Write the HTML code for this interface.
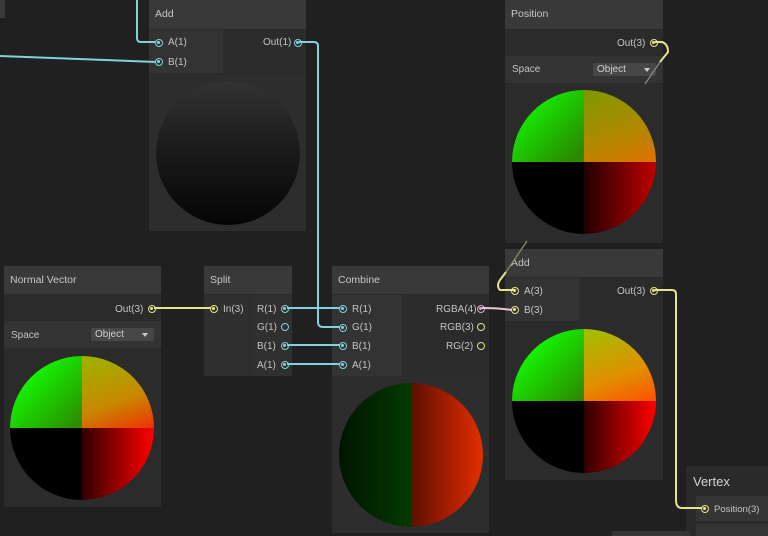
<!DOCTYPE html>
<html><head><meta charset="utf-8"><style>
*{margin:0;padding:0;box-sizing:border-box}
body{width:768px;height:536px;background:#202020;overflow:hidden;position:relative;font-family:"Liberation Sans",sans-serif;font-size:10px;color:#c4c4c4}
.n{position:absolute;background:#2b2b2b}
.h{position:absolute;left:0;right:0;top:0;background:#393939;font-size:10.5px;color:#c8c8c8;padding-left:6px}
.a{position:absolute;background:#333}
.t{position:absolute;white-space:nowrap}
.p{position:absolute;width:8px;height:8px;border-radius:50%;border:1.4px solid #7fd3dc;}
.p::after{content:"";position:absolute;left:1.4px;top:1.4px;width:2.4px;height:2.4px;border-radius:50%;background:#7fd3dc}
.y{border-color:#e4e48a}.y::after{background:#e4e48a}
.pk{border-color:#d9a9d0}.pk::after{background:#d9a9d0}
.e::after{display:none}
.sph{position:absolute;border-radius:50%;overflow:hidden}
.sph div{position:absolute;width:50%;height:50%}
.dd{position:absolute;background:#474747;border-radius:2px;color:#d0d0d0;padding-left:4px;font-size:10px}
.dd::after{content:"";position:absolute;right:6px;top:5px;border-left:3px solid transparent;border-right:3px solid transparent;border-top:4px solid #ccc}
</style></head><body>
<div style="position:absolute;left:0;top:0;width:5px;height:18px;background:#3a3a3a"></div>

<!-- Add top -->
<div class="n" style="left:149px;top:0;width:157px;height:231px">
<div class="h" style="height:29px;line-height:29px">Add</div>
<div class="a" style="left:0;top:30px;width:74px;height:43px"></div>
<div style="position:absolute;left:0;right:0;top:74px;height:157px;background:#2d2d2d"></div>
<div class="sph" style="left:7px;top:81px;width:144px;height:144px;background:linear-gradient(180deg,#333 0%,#1c1c1c 45%,#050505 100%)"></div>
</div>
<div class="p" style="left:155px;top:39px"></div><div class="t" style="left:168px;top:37px">A(1)</div>
<div class="p" style="left:155px;top:58px"></div><div class="t" style="left:168px;top:57px">B(1)</div>
<div class="t" style="left:263px;top:37px">Out(1)</div><div class="p" style="left:294px;top:39px"></div>

<!-- Position -->
<div class="n" style="left:505px;top:0;width:158px;height:243px">
<div class="h" style="height:29px;line-height:29px">Position</div>
<div style="position:absolute;left:0;right:0;top:56px;height:27px;background:#333"></div>
<div class="dd" style="left:88px;top:63px;width:63px;height:13px;line-height:13px">Object</div>
<div class="t" style="left:7px;top:64px">Space</div>
<div class="t" style="left:112px;top:38px">Out(3)</div>
<div class="sph" style="left:7px;top:90px;width:144px;height:144px">
<div style="left:0;top:0;background:linear-gradient(135deg,#1f0 10%,#2a8a00 90%)"></div>
<div style="left:50%;top:0;background:linear-gradient(160deg,#7c9a00,#b28800 60%,#e07000)"></div>
<div style="left:0;top:50%;background:#000"></div>
<div style="left:50%;top:50%;background:linear-gradient(90deg,#220000,#c00000)"></div>
</div>
</div>
<div class="p y" style="left:650px;top:39px"></div>

<!-- Normal Vector -->
<div class="n" style="left:4px;top:266px;width:157px;height:241px">
<div class="h" style="height:28px;line-height:28px">Normal Vector</div>
<div style="position:absolute;left:0;right:0;top:55px;height:27px;background:#333"></div>
<div class="t" style="left:7px;top:64px">Space</div>
<div class="dd" style="left:87px;top:62px;width:63px;height:13px;line-height:13px">Object</div>
<div class="t" style="left:111px;top:38px">Out(3)</div>
<div class="sph" style="left:6px;top:90px;width:144px;height:144px">
<div style="left:0;top:0;background:linear-gradient(135deg,#1f0 20%,#2c8c00 95%)"></div>
<div style="left:50%;top:0;background:linear-gradient(160deg,#9cb400,#c88800 60%,#f03000)"></div>
<div style="left:0;top:50%;background:#000"></div>
<div style="left:50%;top:50%;background:linear-gradient(90deg,#300000,#ff0000)"></div>
</div>
</div>
<div class="p y" style="left:148px;top:305px"></div>

<!-- Split -->
<div class="n" style="left:204px;top:266px;width:88px;height:110px">
<div class="h" style="height:28px;line-height:28px">Split</div>
<div class="a" style="left:0;top:29px;width:46px;height:81px;background:#2f2f2f"></div>
<div class="a" style="left:47px;top:29px;width:41px;height:81px;background:#303030"></div>
</div>
<div class="p y" style="left:210px;top:305px"></div><div class="t" style="left:223px;top:304px">In(3)</div>
<div class="t" style="left:257px;top:304px">R(1)</div><div class="p" style="left:281px;top:305px"></div>
<div class="t" style="left:257px;top:322px">G(1)</div><div class="p e" style="left:281px;top:323px"></div>
<div class="t" style="left:257px;top:341px">B(1)</div><div class="p" style="left:281px;top:342px"></div>
<div class="t" style="left:257px;top:360px">A(1)</div><div class="p" style="left:281px;top:361px"></div>

<!-- Combine -->
<div class="n" style="left:332px;top:266px;width:157px;height:267px">
<div class="h" style="height:28px;line-height:28px">Combine</div>
<div class="a" style="left:0;top:29px;width:70px;height:81px"></div>
<div style="position:absolute;left:0;right:0;top:111px;bottom:0;background:#2d2d2d"></div>
<div class="sph" style="left:7px;top:117px;width:144px;height:144px;background:linear-gradient(90deg,#001500,#033a00 50%,#5a1000 50%,#b22000 80%,#e03000)">
</div>
</div>
<div class="p" style="left:339px;top:305px"></div><div class="t" style="left:352px;top:304px">R(1)</div>
<div class="p" style="left:339px;top:324px"></div><div class="t" style="left:352px;top:322px">G(1)</div>
<div class="p" style="left:339px;top:342px"></div><div class="t" style="left:352px;top:341px">B(1)</div>
<div class="p" style="left:339px;top:361px"></div><div class="t" style="left:352px;top:360px">A(1)</div>
<div class="t" style="left:436px;top:304px">RGBA(4)</div><div class="p pk" style="left:477px;top:305px"></div>
<div class="t" style="left:440px;top:322px">RGB(3)</div><div class="p y e" style="left:477px;top:323px"></div>
<div class="t" style="left:446px;top:341px">RG(2)</div><div class="p y e" style="left:477px;top:342px"></div>

<!-- Add 2 -->
<div class="n" style="left:505px;top:249px;width:158px;height:231px">
<div class="h" style="height:28px;line-height:28px">Add</div>
<div class="a" style="left:0;top:29px;width:74px;height:43px"></div>
<div class="sph" style="left:7px;top:80px;width:144px;height:144px">
<div style="left:0;top:0;background:linear-gradient(135deg,#1f0 20%,#2c8c00 95%)"></div>
<div style="left:50%;top:0;background:linear-gradient(160deg,#a0c000,#e09000 60%,#ff5000)"></div>
<div style="left:0;top:50%;background:#000"></div>
<div style="left:50%;top:50%;background:linear-gradient(90deg,#300000,#ff0000)"></div>
</div>
</div>
<div class="p y" style="left:511px;top:287px"></div><div class="t" style="left:524px;top:286px">A(3)</div>
<div class="p y" style="left:511px;top:306px"></div><div class="t" style="left:524px;top:305px">B(3)</div>
<div class="t" style="left:617px;top:286px">Out(3)</div><div class="p y" style="left:650px;top:287px"></div>

<!-- Vertex -->
<div style="position:absolute;left:686px;top:466px;width:82px;height:70px;background:#2a2a2a"></div>
<div class="t" style="left:693px;top:474px;font-size:13px;color:#d4d4d4">Vertex</div>
<div style="position:absolute;left:696px;top:496px;width:72px;height:25px;background:#353535"></div>
<div class="p y" style="left:701px;top:505px"></div><div class="t" style="left:714px;top:504px;font-size:9.5px">Position(3)</div>
<div style="position:absolute;left:696px;top:524px;width:72px;height:12px;background:#353535"></div>
<div style="position:absolute;left:612px;top:531px;width:78px;height:5px;background:#353535"></div>

<svg width="768" height="536" style="position:absolute;left:0;top:0" fill="none" stroke-width="2">
<g stroke="#7fd3dc">
<path d="M137 0 V38 Q137 42 141 42 H156"/>
<path d="M0 56 L156 62"/>
<path d="M299 42 H314 Q318 42 318 46 V322 Q318 327 323 327 H340"/>
<path d="M287 308 H340"/>
<path d="M287 345 H340"/>
<path d="M287 364 H340"/>
</g>
<g stroke="#e4e48a">
<path d="M154 308 H211"/>
<path d="M655 42 H662 Q668 44 668 52 L660 62"/>
<path d="M514 290 H500 Q496 286 500 280 L506 272"/>
<path d="M655 290 H672 Q676 290 676 294 V500 Q676 508 682 508 H702"/>
</g>
<path d="M660 62 L645 84" stroke="#888" stroke-width="1.3"/>
<path d="M506 272 L527 241" stroke="#8a8a6a" stroke-width="1.3"/>
<path d="M482 308 Q498 308 512 310" stroke="#e8c8d8"/>
</svg>
</body></html>
